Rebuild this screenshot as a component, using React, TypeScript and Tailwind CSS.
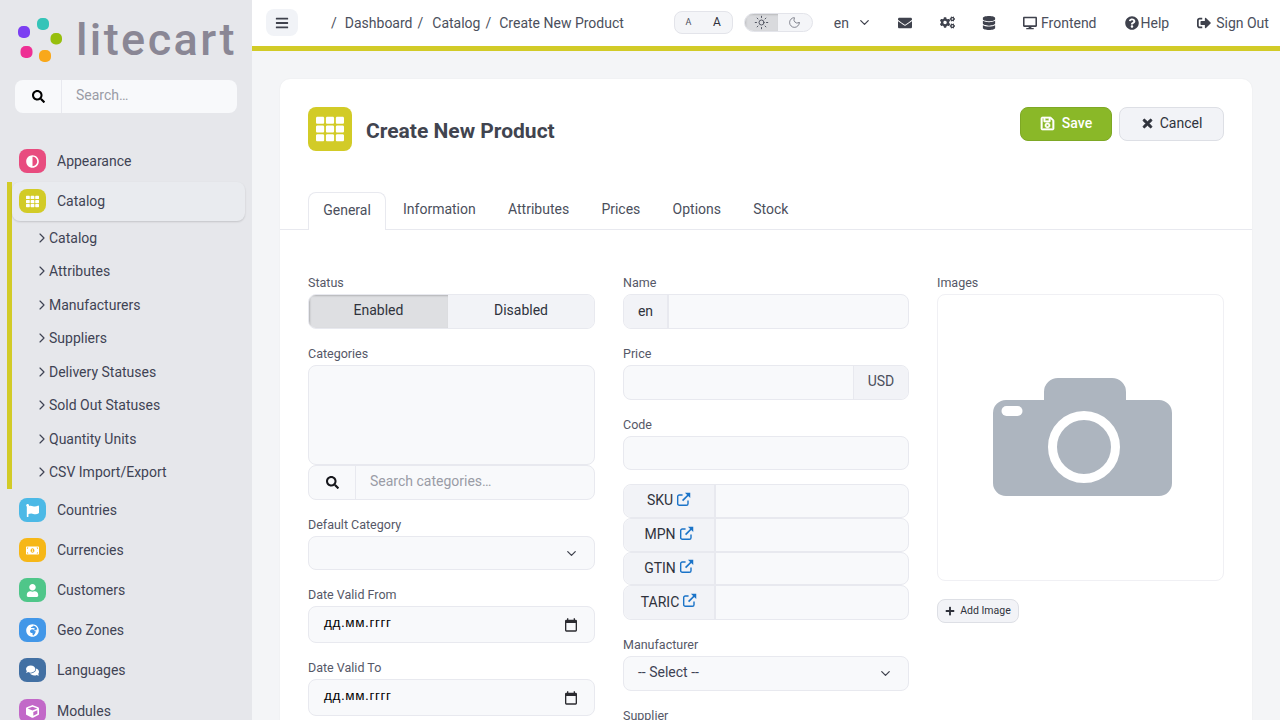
import { FC, ReactNode } from 'react'
import {
  FaAdjust,
  FaBars,
  FaCogs,
  FaComments,
  FaCube,
  FaDatabase,
  FaDesktop,
  FaEnvelope,
  FaFlag,
  FaGlobeAfrica,
  FaMoneyBillAlt,
  FaPlus,
  FaQuestionCircle,
  FaRegSave,
  FaSearch,
  FaSignOutAlt,
  FaTh,
  FaTimes,
  FaUser,
} from 'react-icons/fa'
import { ChevronDown, ChevronRight, Moon, Sun } from 'lucide-react'

const subItems = [
  'Catalog',
  'Attributes',
  'Manufacturers',
  'Suppliers',
  'Delivery Statuses',
  'Sold Out Statuses',
  'Quantity Units',
  'CSV Import/Export',
]

const fieldStyle = 'rounded-lg border border-[#e8e9ef] bg-[#f8f9fb]'

const NavRow: FC<{ label: string; color: string; icon: ReactNode; className?: string }> = ({
  label,
  color,
  icon,
  className = 'h-10 pl-[19px]',
}) => (
  <div className={`flex items-center gap-[11px] text-sm text-[#3f4354] ${className}`}>
    <span className={`flex h-6 w-[27px] items-center justify-center rounded-lg text-[13px] text-white ${color}`}>
      {icon}
    </span>
    {label}
  </div>
)

const Sidebar: FC = () => (
  <aside className="h-full w-[252px] shrink-0 overflow-hidden bg-[#e6e7eb]">
    <div className="flex h-[62px] items-end pl-[18px]">
      <svg width="46" height="44" viewBox="0 0 46 44" className="shrink-0">
        <rect x="0" y="8" width="12" height="12" rx="5" fill="#7c3ff2" />
        <rect x="19" y="0" width="12" height="12" rx="5" fill="#35c4b8" />
        <rect x="32.5" y="15" width="11.5" height="11.5" rx="5" fill="#97bf0d" />
        <rect x="21" y="32" width="12" height="12" rx="5" fill="#f9a81a" />
        <rect x="2.5" y="28" width="12" height="12" rx="5" fill="#ee2f94" />
      </svg>
      <span className="mb-[-3px] ml-3 text-[45px] leading-[50px] font-medium tracking-[2.4px] text-[#8a8795]">
        litecart
      </span>
    </div>

    <div className="mx-[15px] mt-[18px] flex h-[33px] rounded-lg bg-[#f8f9fb]">
      <div className="flex w-[47px] items-center justify-center border-r border-[#e8e9ef] text-[13px] text-black">
        <FaSearch />
      </div>
      <span className="pl-[14px] text-sm leading-[31px] text-[#9a9ca6]">Search…</span>
    </div>

    <nav className="mt-7">
      <NavRow label="Appearance" color="bg-[#e84c7f]" icon={<FaAdjust />} className="mb-px h-10 pl-[19px]" />
      <div className="ml-[7px] border-l-[5px] border-[#d2cb27]">
        <div className="mr-[7px] rounded-lg bg-[#e9ebef] shadow-[0_1px_2px_rgba(0,0,0,0.15)]">
          <NavRow label="Catalog" color="bg-[#d2cb27]" icon={<FaTh />} className="h-[39px] pb-px pl-[7px]" />
        </div>
        {subItems.map(item => (
          <div key={item} className="flex h-[33.5px] items-center pl-[22px] text-sm text-[#3f4354]">
            <ChevronRight className="-mr-px size-4 shrink-0" strokeWidth={1.75} />
            <span>{item}</span>
          </div>
        ))}
      </div>
      <NavRow label="Countries" color="bg-[#4cb9e6]" icon={<FaFlag />} className="mt-px h-10 pl-[19px]" />
      <NavRow label="Currencies" color="bg-[#f6b717]" icon={<FaMoneyBillAlt />} />
      <NavRow label="Customers" color="bg-[#4fc689]" icon={<FaUser />} />
      <NavRow label="Geo Zones" color="bg-[#4297e8]" icon={<FaGlobeAfrica />} />
      <NavRow label="Languages" color="bg-[#4270a3]" icon={<FaComments />} />
      <NavRow label="Modules" color="bg-[#c268c8]" icon={<FaCube />} className="mt-px h-10 pl-[19px]" />
    </nav>
  </aside>
)

const TopLink: FC<{ icon: ReactNode; label: string; className: string }> = ({ icon, label, className }) => (
  <div className={`flex items-center text-sm text-[#4b4f5c] ${className}`}>
    <span className="text-[14px] text-[#3f424d]">{icon}</span>
    {label}
  </div>
)

const TopBar: FC = () => (
  <header className="flex h-[51px] shrink-0 items-center border-b-[5px] border-[#d2cb27] bg-white pb-px pl-3.5 text-sm text-[#4b4f5c]">
    <button className="flex h-[27px] w-8 items-center justify-center rounded-lg bg-[#f1f3f7] text-[14px] text-[#3f424d]">
      <FaBars />
    </button>
    <div className="ml-[33px] flex">
      <span>/</span>
      <span className="ml-2">Dashboard</span>
      <span className="ml-[5px]">/</span>
      <span className="ml-[9px]">Catalog</span>
      <span className="ml-[5px]">/</span>
      <span className="ml-2">Create New Product</span>
    </div>

    <div className="ml-[50px] flex h-[23px] w-[59px] items-center rounded-lg border border-[#e3e4ea] bg-[#f4f5f8]">
      <span className="w-[27px] text-center text-[9px]">A</span>
      <span className="w-[30px] text-center text-[12px] text-[#2f323c]">A</span>
    </div>
    <div className="ml-[11px] flex h-[19px] w-[69px] overflow-hidden rounded-[10px] border border-[#e3e4ea] bg-[#f4f5f8]">
      <span className="flex w-[33px] items-center justify-center bg-[#d9dadd] shadow-[inset_1px_1px_2px_rgba(0,0,0,0.15)]">
        <Sun className="size-[15px]" strokeWidth={1.5} />
      </span>
      <span className="flex flex-1 items-center justify-center">
        <Moon className="size-[13px]" strokeWidth={1.2} />
      </span>
    </div>
    <span className="ml-[21px]">en</span>
    <ChevronDown className="ml-2 size-[15px] text-[#3f424d]" strokeWidth={2} />
    <FaEnvelope className="ml-[26px] text-[14px] text-[#3f424d]" />
    <FaCogs className="ml-[28px] text-[15px] text-[#3f424d]" />
    <FaDatabase className="ml-[27px] text-[14px] text-[#3f424d]" />
    <TopLink icon={<FaDesktop />} label="Frontend" className="ml-[27px] gap-1" />
    <TopLink icon={<FaQuestionCircle />} label="Help" className="ml-7 gap-0.5" />
    <TopLink icon={<FaSignOutAlt />} label="Sign Out" className="ml-7 gap-[5px]" />
  </header>
)

const Field: FC<{ label: string; children: ReactNode; className?: string }> = ({ label, children, className = 'mb-[17px]' }) => (
  <div className={className}>
    <div className="mb-0.5 h-[17px] text-[12.5px] leading-[15px] text-[#555867]">{label}</div>
    {children}
  </div>
)

const Select: FC<{ value?: string; height?: string }> = ({ value, height = 'h-[35px]' }) => (
  <div className={`flex items-center justify-between pr-[15px] pl-3.5 text-sm text-[#3f4354] ${height} ${fieldStyle}`}>
    <span className="mb-1">{value}</span>
    <ChevronDown className="size-[15px] text-[#3f424d]" strokeWidth={2} />
  </div>
)

const CalendarIcon: FC = () => (
  <svg width="16" height="16" viewBox="0 0 24 24" fill="#2b2b30">
    <path d="M19 4h-1V2h-2v2H8V2H6v2H5a2 2 0 0 0-2 2v14a2 2 0 0 0 2 2h14a2 2 0 0 0 2-2V6a2 2 0 0 0-2-2zm0 16H5V9h14z" />
  </svg>
)

const DateInput: FC = () => (
  <div className={`flex h-[37px] items-center justify-between pr-[15px] pl-[15px] ${fieldStyle}`}>
    <span className="mb-0.5 font-['Liberation_Sans',sans-serif] text-[13.5px] tracking-[0.6px] text-black">дд.мм.гггг</span>
    <CalendarIcon />
  </div>
)

const ExternalLink: FC = () => (
  <svg width="15" height="15" viewBox="0 0 16 16" className="mb-0.5 shrink-0 text-[#1a73c8]">
    <path
      d="M7 3.2H3.5A1.7 1.7 0 0 0 1.8 4.9v7.6a1.7 1.7 0 0 0 1.7 1.7h7.6a1.7 1.7 0 0 0 1.7-1.7V9"
      fill="none"
      stroke="currentColor"
      strokeWidth="1.5"
    />
    <path d="M7 9.2 13 3.2" stroke="currentColor" strokeWidth="1.8" />
    <polygon points="9.5,0.8 15.2,0.8 15.2,6.5" fill="currentColor" />
  </svg>
)

const CodeRow: FC<{ label: string; height: string }> = ({ label, height }) => (
  <div className={`flex rounded-lg border border-[#e8e9ef] bg-[#f8f9fb] ${height}`}>
    <div className="flex w-[92px] items-center justify-center gap-[3px] rounded-l-lg border-r-2 border-[#e8e9ef] bg-[#f2f3f7] pb-0.5 text-sm text-[#2f323c]">
      {label}
      <ExternalLink />
    </div>
  </div>
)

const GeneralColumn: FC = () => (
  <div className="w-[287px]">
    <Field label="Status">
      <div className={`flex h-[35px] overflow-hidden text-sm text-[#2f323c] ${fieldStyle}`}>
        <div className="flex w-[139px] items-center justify-center bg-[#dedfe2] pb-1 shadow-[inset_1px_1px_2px_rgba(0,0,0,0.2)]">
          Enabled
        </div>
        <div className="flex flex-1 items-center justify-center bg-[#f2f3f7] pb-1">Disabled</div>
      </div>
    </Field>
    <Field label="Categories">
      <div className={`h-[100px] ${fieldStyle}`} />
      <div className={`flex h-[35px] ${fieldStyle}`}>
        <div className="flex w-[47px] items-center justify-center border-r border-[#e8e9ef] text-[13px] text-[#16171c]">
          <FaSearch />
        </div>
        <span className="pl-3.5 text-sm leading-[31px] text-[#9a9ca6]">Search categories…</span>
      </div>
    </Field>
    <Field label="Default Category">
      <Select height="h-[34px]" />
    </Field>
    <Field label="Date Valid From">
      <DateInput />
    </Field>
    <Field label="Date Valid To">
      <DateInput />
    </Field>
  </div>
)

const DetailsColumn: FC = () => (
  <div className="w-[286px]">
    <Field label="Name">
      <div className={`flex h-[35px] overflow-hidden ${fieldStyle}`}>
        <div className="flex w-[45px] items-center justify-center border-r-2 border-[#e8e9ef] bg-[#f2f3f7] pb-0.5 text-sm text-[#2f323c]">
          en
        </div>
      </div>
    </Field>
    <Field label="Price">
      <div className={`flex h-[35px] justify-end overflow-hidden ${fieldStyle}`}>
        <div className="flex w-[55px] items-center justify-center border-l border-[#e8e9ef] bg-[#f2f3f7] pb-1 text-sm text-[#4b4f5c]">
          USD
        </div>
      </div>
    </Field>
    <Field label="Code" className="mb-3.5">
      <div className={`h-[34px] ${fieldStyle}`} />
    </Field>
    <div className="mb-[17px]">
      <CodeRow label="SKU" height="h-[34px]" />
      <CodeRow label="MPN" height="h-[34px]" />
      <CodeRow label="GTIN" height="h-[33px]" />
      <CodeRow label="TARIC" height="h-[35px]" />
    </div>
    <Field label="Manufacturer">
      <Select value="-- Select --" />
    </Field>
    <Field label="Supplier">
      <Select />
    </Field>
  </div>
)

const ImagesColumn: FC = () => (
  <div className="w-[287px]">
    <Field label="Images" className="mb-[18px]">
      <div className="flex h-[287px] items-center justify-center rounded-lg border border-[#f0f0f4] bg-white pb-0.5 pl-[3px]">
        <svg width="179" height="118" viewBox="0 0 179 118" className="shrink-0">
          <path
            d="M51 22V14A14 14 0 0 1 65 0H119A14 14 0 0 1 133 14V22H166A13 13 0 0 1 179 35V105A13 13 0 0 1 166 118H13A13 13 0 0 1 0 105V35A13 13 0 0 1 13 22Z"
            fill="#adb5bf"
          />
          <rect x="8.5" y="28" width="21" height="10" rx="5" fill="#fff" />
          <circle cx="91" cy="69" r="31.5" fill="none" stroke="#fff" strokeWidth="9" />
        </svg>
      </div>
    </Field>
    <button className="flex h-6 w-[82px] items-center justify-center gap-[5px] rounded-lg border border-[#dddfe5] bg-[#f2f3f7] text-[10.5px] text-[#2f323c]">
      <FaPlus className="text-[10px]" />
      Add Image
    </button>
  </div>
)

const tabs = ['Information', 'Attributes', 'Prices', 'Options', 'Stock']

const ProductCard: FC = () => (
  <section className="mx-7 mt-7 rounded-t-[10px] bg-white pt-7 shadow-[0_0_2px_rgba(0,0,0,0.06)]">
    <div className="flex justify-between px-7">
      <div className="flex items-center gap-3.5">
        <span className="flex size-11 items-center justify-center rounded-lg bg-[#d2cb27] text-[28px] text-white">
          <FaTh />
        </span>
        <h1 className="pt-[5px] text-[21px] font-bold text-[#41444f]">Create New Product</h1>
      </div>
      <div className="flex h-[34px] gap-[7px] text-sm">
        <button className="flex w-[92px] items-center justify-center gap-[7px] rounded-lg border border-[#7ea825] bg-[#8ab828] pb-0.5 font-medium text-white">
          <FaRegSave className="text-[15px]" stroke="currentColor" strokeWidth={20} />
          Save
        </button>
        <button className="flex w-[105px] items-center justify-center gap-1.5 rounded-lg border border-[#dddfe5] bg-[#f2f3f7] pb-0.5 text-[#2f323c]">
          <FaTimes className="text-[13px]" stroke="currentColor" strokeWidth={30} />
          Cancel
        </button>
      </div>
    </div>

    <div className="mt-[41px] flex h-[38px] border-b border-[#e8e9ef] pl-7 text-sm text-[#4b4f5c]">
      <div className="flex h-[38px] w-[78px] items-center justify-center rounded-t-lg border border-b-0 border-[#e8e9ef] bg-white pb-[3px]">
        General
      </div>
      <div className="flex h-[34px] items-center gap-[32.25px] pl-[17px]">
        {tabs.map(tab => (
          <span key={tab}>{tab}</span>
        ))}
      </div>
    </div>

    <div className="flex gap-7 px-7 pt-[45px]">
      <GeneralColumn />
      <DetailsColumn />
      <ImagesColumn />
    </div>
  </section>
)

export default function App() {
  return (
    <div className="flex h-screen overflow-hidden bg-[#f4f5f7] font-['Roboto',sans-serif]">
      <Sidebar />
      <main className="flex min-w-0 flex-1 flex-col">
        <TopBar />
        <ProductCard />
      </main>
    </div>
  )
}
